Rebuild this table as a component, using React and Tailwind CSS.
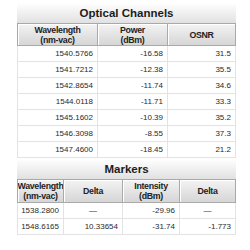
const channels = [
  ["1540.5766", "-16.58", "31.5"],
  ["1541.7212", "-12.38", "35.5"],
  ["1542.8654", "-11.74", "34.6"],
  ["1544.0118", "-11.71", "33.3"],
  ["1545.1602", "-10.39", "35.2"],
  ["1546.3098", "-8.55", "37.3"],
  ["1547.4600", "-18.45", "21.2"],
];

const markers = [
  ["1538.2800", "—", "-29.96", "—"],
  ["1548.6165", "10.33654", "-31.74", "-1.773"],
];

function Band({ children, className = "" }) {
  return (
    <div
      className={`h-[19px] flex items-center justify-center bg-gradient-to-b from-[#fdfdfd] to-[#e1e1e1] text-[11.5px] font-bold text-[#1c1c1c] ${className}`}
    >
      {children}
    </div>
  );
}

function Head({ children }) {
  return (
    <div className="flex flex-col items-center justify-center border border-[#a9a9a9] bg-gradient-to-b from-[#f3f3f3] to-[#d6d6d6] shadow-[inset_1px_1px_0_#ffffff] text-[8.8px] tracking-[-0.3px] font-bold leading-[10px] text-[#222] text-center -ml-px first:ml-0 overflow-hidden">
      {children}
    </div>
  );
}

function Cell({ children, center }) {
  return (
    <div
      className={`h-[16px] flex items-center border-b border-r border-[#e3e3e3] text-[8px] text-[#2a2a2a] first:border-l ${
        center ? "justify-center" : "justify-end pr-[4px]"
      }`}
    >
      {children}
    </div>
  );
}

export default function App() {
  return (
    <div
      className="w-[250px] h-[250px] bg-white pt-[4px] pl-[17px] overflow-hidden"
      style={{ fontFamily: '"Liberation Sans", Arial, sans-serif' }}
    >
      <div className="w-[219px]">
        <Band>Optical Channels</Band>
        <div className="grid grid-cols-[81px_70px_68px] h-[23px]">
          <Head>
            <span>Wavelength</span>
            <span>(nm-vac)</span>
          </Head>
          <Head>
            <span>Power</span>
            <span>(dBm)</span>
          </Head>
          <Head>OSNR</Head>
        </div>
        {channels.map((r) => (
          <div key={r[0]} className="grid grid-cols-[81px_70px_68px]">
            <Cell>{r[0]}</Cell>
            <Cell>{r[1]}</Cell>
            <Cell>{r[2]}</Cell>
          </div>
        ))}

        <Band className="mt-[2px]">Markers</Band>
        <div className="grid grid-cols-[47px_59px_57px_56px] h-[24px]">
          <Head>
            <span>Wavelength</span>
            <span>(nm-vac)</span>
          </Head>
          <Head>Delta</Head>
          <Head>
            <span>Intensity</span>
            <span>(dBm)</span>
          </Head>
          <Head>Delta</Head>
        </div>
        {markers.map((r) => (
          <div key={r[0]} className="grid grid-cols-[47px_59px_57px_56px]">
            <Cell>{r[0]}</Cell>
            <Cell center={r[1] === "—"}>{r[1]}</Cell>
            <Cell>{r[2]}</Cell>
            <Cell center={r[3] === "—"}>{r[3]}</Cell>
          </div>
        ))}
      </div>
    </div>
  );
}
